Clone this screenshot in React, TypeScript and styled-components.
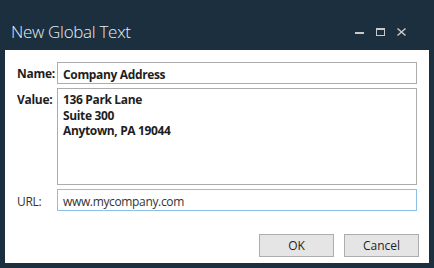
import { FC } from "react";
import styled, { createGlobalStyle } from "styled-components";

const GlobalStyle = createGlobalStyle`
  html, body {
    margin: 0;
    padding: 0;
    background: #1b2f3e;
  }
  body {
    font-family: "Open Sans", "Noto Sans", sans-serif;
  }
`;

const App: FC = () => {
  return (
    <>
      <GlobalStyle />
      <Window>
        <TitleBar>
          <Title>New Global Text</Title>
          <Controls>
            <svg width="9" height="9" viewBox="0 0 9 9">
              <rect x="0" y="5" width="9" height="2" fill="#c9c9c9" />
            </svg>
            <svg width="9" height="8" viewBox="0 0 9 8">
              <rect x="0.5" y="1" width="8" height="6.5" fill="none" stroke="#c9c9c9" />
              <rect x="0" y="0" width="9" height="2" fill="#c9c9c9" />
            </svg>
            <svg width="9" height="8" viewBox="0 0 9 8">
              <path d="M0.5 0.5 L8.5 7.5 M8.5 0.5 L0.5 7.5" stroke="#c9c9c9" strokeWidth="1.4" />
            </svg>
          </Controls>
        </TitleBar>
        <Panel>
          <Form>
            <Label bold>Name:</Label>
            <Field>Company Address</Field>
            <Label bold>Value:</Label>
            <Area>
              136 Park Lane
              <br />
              Suite 300
              <br />
              Anytown, PA 19044
            </Area>
            <Label>URL:</Label>
            <Field focused plain>
              www.mycompany.com
            </Field>
          </Form>
          <Buttons>
            <Button>OK</Button>
            <Button>Cancel</Button>
          </Buttons>
        </Panel>
      </Window>
    </>
  );
};

export default App;

const Window = styled.div`
  width: 434px;
  height: 268px;
  display: flex;
  flex-direction: column;
`;

const TitleBar = styled.div`
  height: 50px;
  display: flex;
  align-items: flex-end;
  justify-content: space-between;
  padding: 0 28px 0 11px;
  box-sizing: border-box;
`;

const Title = styled.div`
  font-size: 17px;
  font-weight: 300;
  color: #e4eef4;
  line-height: 18px;
  padding-bottom: 9px;
  letter-spacing: -0.3px;
`;

const Controls = styled.div`
  display: flex;
  align-items: flex-end;
  gap: 12px;
  padding-bottom: 14px;
`;

const Panel = styled.div`
  margin: 0 5px;
  height: 213px;
  background: #ffffff;
  display: flex;
  flex-direction: column;
  padding: 12px 10px 6px 12px;
  box-sizing: border-box;
`;

const Form = styled.div`
  display: grid;
  grid-template-columns: 40px 360px;
  grid-template-rows: 22px 97px 22px;
  row-gap: 4px;
  font-size: 12px;
  color: #1e1e1e;
`;

const Label = styled.div<{ bold?: boolean }>`
  font-weight: ${({ bold }) => (bold ? 700 : 400)};
  padding-top: ${({ bold }) => (bold ? "3px" : "4px")};
  color: ${({ bold }) => (bold ? "#1e1e1e" : "#333333")};
  letter-spacing: -0.3px;
`;

const Field = styled.div<{ focused?: boolean; plain?: boolean }>`
  border: 1px solid ${({ focused }) => (focused ? "#8ec0e6" : "#acacac")};
  box-sizing: border-box;
  padding: 3px 5px 0;
  font-weight: ${({ plain }) => (plain ? 400 : 700)};
  color: ${({ plain }) => (plain ? "#333333" : "#1e1e1e")};
  letter-spacing: -0.35px;
`;

const Area = styled.div`
  border: 1px solid #acacac;
  box-sizing: border-box;
  padding: 3px 5px 0;
  font-weight: 700;
  line-height: 15.5px;
  letter-spacing: -0.35px;
`;

const Buttons = styled.div`
  margin-top: auto;
  display: flex;
  justify-content: flex-end;
  gap: 10px;
`;

const Button = styled.button`
  width: 75px;
  height: 23px;
  background: #e5e5e5;
  border: 1px solid #adadad;
  font-family: "Open Sans", "Noto Sans", sans-serif;
  font-size: 12px;
  color: #1e1e1e;
  padding: 0;
`;
